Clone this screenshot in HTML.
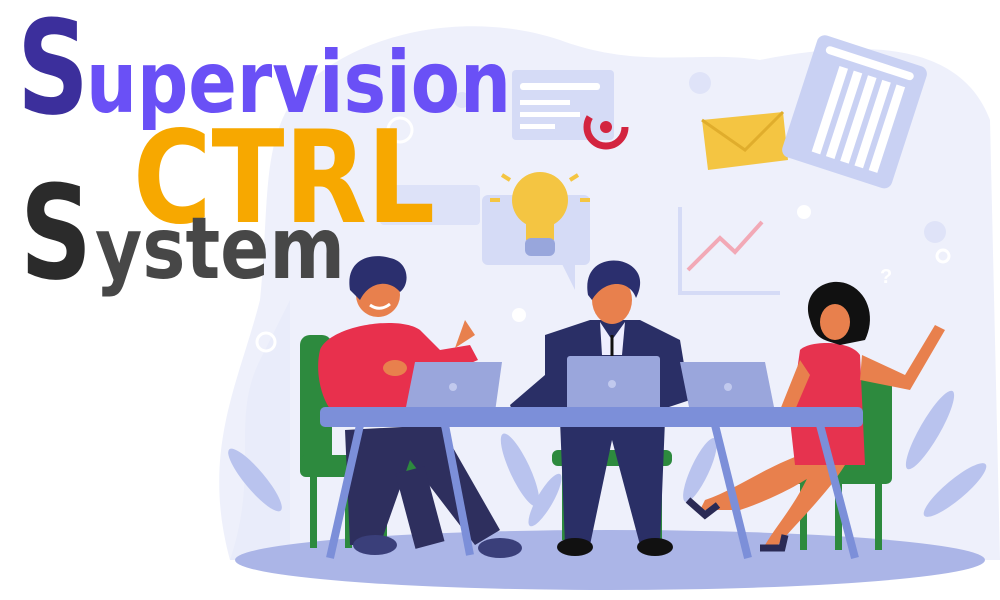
<!DOCTYPE html>
<html><head><meta charset="utf-8"><style>
html,body{margin:0;padding:0;background:#fff;}
svg{display:block}
</style></head><body>
<svg width="1000" height="600" viewBox="0 0 1000 600" xmlns="http://www.w3.org/2000/svg">
<path d="M300 90 C360 30 470 10 560 40 C640 70 700 50 760 60 C860 40 960 40 990 120 L1000 560 L230 560 C200 450 240 380 260 300 C270 200 260 140 300 90Z" fill="#eef0fb"/>
<path d="M230 560 C260 470 230 420 260 360 L290 300 L290 560Z" fill="#e9ecfa"/>
<ellipse cx="610" cy="560" rx="375" ry="30" fill="#abb5e7"/>
<g fill="#b9c3ee">
<ellipse cx="520" cy="470" rx="10" ry="40" transform="rotate(-25 520 470)"/>
<ellipse cx="545" cy="500" rx="8" ry="30" transform="rotate(30 545 500)"/>
<ellipse cx="700" cy="470" rx="9" ry="35" transform="rotate(25 700 470)"/>
<ellipse cx="930" cy="430" rx="10" ry="45" transform="rotate(30 930 430)"/>
<ellipse cx="955" cy="490" rx="10" ry="40" transform="rotate(50 955 490)"/>
<ellipse cx="255" cy="480" rx="10" ry="40" transform="rotate(-40 255 480)"/>
</g>
<rect x="512" y="70" width="102" height="70" rx="4" fill="#d5dbf6"/>
<rect x="520" y="83" width="80" height="7" rx="3" fill="#fff"/>
<rect x="520" y="100" width="50" height="5" fill="#fff"/>
<rect x="520" y="112" width="60" height="5" fill="#fff"/>
<rect x="520" y="124" width="35" height="5" fill="#fff"/>
<circle cx="606" cy="127" r="19" fill="none" stroke="#d3243f" stroke-width="7" stroke-dasharray="70 50"/>
<circle cx="606" cy="127" r="6" fill="#d3243f"/>
<rect x="482" y="195" width="108" height="70" rx="6" fill="#d5dbf6"/>
<path d="M560 260 L575 290 L575 260Z" fill="#d5dbf6"/>
<circle cx="540" cy="200" r="28" fill="#f4c542"/>
<rect x="526" y="215" width="28" height="25" fill="#f4c542"/>
<rect x="525" y="238" width="30" height="18" rx="6" fill="#98a6dc"/>
<g stroke="#f4c542" stroke-width="4"><line x1="500" y1="200" x2="490" y2="200"/><line x1="580" y1="200" x2="590" y2="200"/><line x1="510" y1="180" x2="502" y2="175"/><line x1="570" y1="180" x2="578" y2="175"/></g>
<rect x="380" y="185" width="100" height="40" rx="4" fill="#dde2f8"/>
<path d="M680 207 L680 293 L780 293" fill="none" stroke="#d5dbf6" stroke-width="4"/>
<path d="M688 270 L720 238 L735 252 L762 222" fill="none" stroke="#f2a9b6" stroke-width="4"/>
<path d="M702 120 L783 112 L788 160 L708 170Z" fill="#f4c542"/>
<path d="M702 120 L745 150 L783 112" fill="none" stroke="#e0ad2c" stroke-width="3"/>
<g transform="rotate(18 855 112)">
<rect x="797" y="48" width="115" height="128" rx="8" fill="#c9d1f3"/>
<rect x="808" y="57" width="92" height="8" rx="4" fill="#fff"/>
<g fill="#fff"><rect x="826" y="73" width="9" height="90"/><rect x="841" y="73" width="9" height="90"/><rect x="856" y="73" width="9" height="90"/><rect x="871" y="73" width="9" height="90"/><rect x="886" y="73" width="9" height="90"/></g>
</g>
<g fill="#dfe3f8"><circle cx="700" cy="83" r="11"/><circle cx="935" cy="232" r="11"/><circle cx="462" cy="100" r="8"/></g>
<g fill="#fff"><circle cx="804" cy="212" r="7"/><circle cx="519" cy="315" r="7"/></g>
<circle cx="266" cy="342" r="9" fill="none" stroke="#fff" stroke-width="3"/>
<circle cx="943" cy="256" r="6" fill="none" stroke="#fff" stroke-width="3"/>
<circle cx="400" cy="130" r="12" fill="none" stroke="#fff" stroke-width="3"/>
<g fill="#2d8a3e">
<rect x="300" y="335" width="32" height="140" rx="10"/>
<rect x="300" y="455" width="120" height="22" rx="6"/>
<rect x="310" y="470" width="7" height="78"/><rect x="345" y="470" width="7" height="78"/><rect x="380" y="470" width="7" height="78"/>
<rect x="552" y="450" width="120" height="16" rx="6"/>
<rect x="562" y="460" width="7" height="80"/><rect x="655" y="460" width="7" height="80"/>
<rect x="860" y="372" width="32" height="110" rx="10"/>
<rect x="790" y="462" width="102" height="22" rx="6"/>
<rect x="800" y="475" width="7" height="75"/><rect x="835" y="475" width="7" height="75"/><rect x="875" y="475" width="7" height="75"/>
</g>
<path d="M345 430 L440 425 L500 530 L475 545 L410 460 L380 545 L350 545Z" fill="#2e2f5e"/>
<path d="M410 470 L430 545" stroke="#2e2f5e" stroke-width="30"/>
<ellipse cx="375" cy="545" rx="22" ry="10" fill="#3a3f7a"/><ellipse cx="500" cy="548" rx="22" ry="10" fill="#3a3f7a"/>
<path d="M320 350 C330 325 400 315 420 330 L440 350 L470 345 L478 360 L430 380 L420 415 L335 415 C320 400 315 370 320 350Z" fill="#e8304d"/>
<path d="M455 348 L465 320 L475 335 Z" fill="#e8804d"/>
<circle cx="378" cy="295" r="22" fill="#e8804d"/>
<path d="M350 290 C345 260 370 252 390 258 C410 262 410 285 400 292 C390 280 370 280 360 300Z" fill="#2b2f6e"/>
<path d="M370 305 Q380 312 390 304" stroke="#fff" stroke-width="3" fill="none"/>
<ellipse cx="395" cy="368" rx="12" ry="8" fill="#e8804d"/>
<path d="M560 420 L665 420 L660 545 L640 545 L612 440 L590 545 L565 545Z" fill="#2a2f66"/>
<ellipse cx="575" cy="547" rx="18" ry="9" fill="#111"/><ellipse cx="655" cy="547" rx="18" ry="9" fill="#111"/>
<path d="M545 335 L590 320 L640 320 L680 340 L690 400 L660 410 L560 410 L515 418 L510 405 L545 375Z" fill="#2a2f66"/>
<path d="M600 322 L612 340 L625 322 L622 355 L602 355Z" fill="#eef"/>
<line x1="612" y1="335" x2="612" y2="358" stroke="#111" stroke-width="3"/>
<ellipse cx="612" cy="300" rx="20" ry="24" fill="#e8804d"/>
<path d="M588 295 C582 260 615 255 630 265 C645 275 640 290 636 298 C630 280 605 278 592 300Z" fill="#2b2f6e"/>
<path d="M800 455 C760 470 735 490 705 500 L700 510 L740 510 C770 500 800 485 820 470Z" fill="#e8804d"/>
<path d="M815 460 C800 500 780 520 765 545 L775 548 C800 520 830 490 845 465Z" fill="#e8804d"/>
<path d="M688 500 L705 515 L718 505" stroke="#2a2a55" stroke-width="7" fill="none"/>
<path d="M760 548 L782 548 L785 535" stroke="#2a2a55" stroke-width="7" fill="none"/>
<path d="M800 350 C810 340 850 340 860 355 L865 465 L795 465 L790 420 Z" fill="#e6334f"/>
<path d="M862 355 L905 375 L935 325 L945 330 L910 390 L860 380Z" fill="#e8804d"/>
<path d="M800 360 L780 410 L770 415 L775 420 L795 410 L810 375Z" fill="#e8804d"/>
<path d="M810 320 C800 290 830 275 850 285 C870 295 875 320 865 340 L840 345 C825 340 815 340 810 320Z" fill="#111"/>
<ellipse cx="835" cy="322" rx="15" ry="18" fill="#e8804d"/>
<g fill="#9aa6dc">
<path d="M415 362 L502 362 L495 412 L405 412Z"/>
<rect x="567" y="356" width="93" height="56" rx="3"/>
<path d="M680 362 L765 362 L775 412 L690 412Z"/>
</g>
<g fill="#c1c9ee"><circle cx="453" cy="387" r="4"/><circle cx="612" cy="384" r="4"/><circle cx="728" cy="387" r="4"/></g>
<rect x="320" y="407" width="543" height="20" rx="5" fill="#7c8fd9"/>
<g stroke="#7c8fd9" stroke-width="8">
<line x1="360" y1="425" x2="330" y2="558"/><line x1="445" y1="425" x2="470" y2="555"/>
<line x1="715" y1="425" x2="748" y2="558"/><line x1="820" y1="425" x2="855" y2="558"/>
</g>
<text x="880" y="283" font-family="Liberation Sans, sans-serif" font-size="20" font-weight="bold" fill="#fff">?</text>
<g font-family="DejaVu Sans, Liberation Sans, sans-serif" font-weight="bold">
<text x="17" y="113" font-size="130" fill="#3c2f9c" textLength="72" lengthAdjust="spacingAndGlyphs">S</text>
<text x="86" y="112" font-size="86" fill="#6a50f6" textLength="425" lengthAdjust="spacingAndGlyphs">upervision</text>
<text x="133" y="222" font-size="128" fill="#f7a800" textLength="302" lengthAdjust="spacingAndGlyphs">CTRL</text>
<text x="20" y="278" font-size="130" fill="#2b2b2b" textLength="72" lengthAdjust="spacingAndGlyphs">S</text>
<text x="95" y="278" font-size="86" fill="#474747" textLength="250" lengthAdjust="spacingAndGlyphs">ystem</text>
</g>
</svg>
</body></html>
